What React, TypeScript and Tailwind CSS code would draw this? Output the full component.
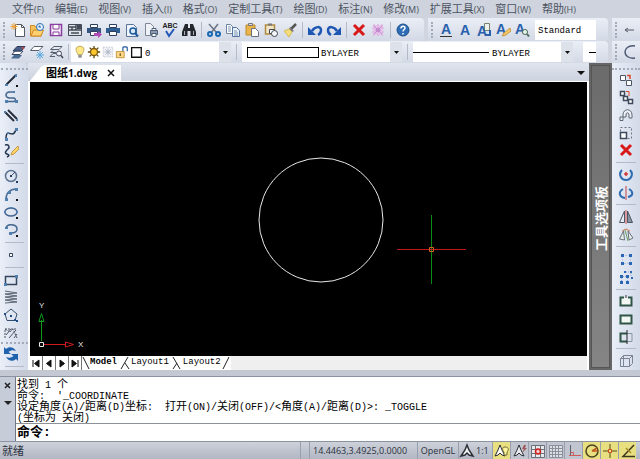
import type { ReactNode } from 'react'

const cjk = "font-['Open_Sans','Noto_Sans_CJK_SC',sans-serif]"
const mono = "font-['Liberation_Mono','Noto_Sans_CJK_SC',monospace]"

const menus = [
  ['文件', 'F'],
  ['编辑', 'E'],
  ['视图', 'V'],
  ['插入', 'I'],
  ['格式', 'O'],
  ['定制工具', 'T'],
  ['绘图', 'D'],
  ['标注', 'N'],
  ['修改', 'M'],
  ['扩展工具', 'X'],
  ['窗口', 'W'],
  ['帮助', 'H'],
]

const LetterA = ({ x, y }: { x: number; y: number }) => (
  <text x={x} y={y} textAnchor="middle" fontSize="14" fontWeight="700" fill="#2860ad" fontFamily="Liberation Sans">
    A
  </text>
)

const icons: Record<string, ReactNode> = {
  new: (
    <>
      <path d="M5.500 2.500h6l3 3v9h-9z" fill="#fff" stroke="#555b66" />
      <path d="M11.500 2.500v3h3" fill="none" stroke="#555b66" />
      <path d="M4 1v7M.5 4.500h7M1.500 2l5 5M6.500 2l-5 5" stroke="#f0a030" />
    </>
  ),
  open: (
    <>
      <path d="M1.500 3.500h4l1 1.500h6v9h-11z" fill="#f5c35b" stroke="#d08a26" />
      <path d="M2 14l2.500-6h10L12 14z" fill="#ffd070" stroke="#d08a26" />
      <circle cx="11" cy="5" r="3.500" fill="#e8f2fc" stroke="#2a6fb5" />
      <path d="M9 5l2-2 1 3z" fill="#2a6fb5" />
    </>
  ),
  save: (
    <>
      <path d="M2.500 2.500h11v11h-11z" fill="#f5edf8" stroke="#8a3f9e" strokeWidth="1.500" />
      <path d="M5 3v4h6V3M5 13v-3h6v3" fill="#fff" stroke="#8a3f9e" />
    </>
  ),
  saveAll: (
    <>
      <path d="M1.500 2.500h13v11h-13z" fill="#dfe3ea" stroke="#454b56" />
      <path d="M2 5h7M2 8h12M5 5v3M9 3v5M4 11h8" stroke="#454b56" strokeWidth="1.500" />
      <path d="M10 3h4v4h-4z" fill="#454b56" />
    </>
  ),
  plot: (
    <>
      <path d="M4.500 2.500h7v3h-7z" fill="#fff" stroke="#2d3f5c" />
      <path d="M1 6h14v5H1z" fill="#34557f" />
      <path d="M4.500 9.500h7v4h-7z" fill="#fff" stroke="#2d3f5c" />
      <path d="M8 11h4V9l4 3.500-4 3.500v-2H8z" fill="#b04ab5" />
    </>
  ),
  print: (
    <>
      <path d="M4.500 2.500h7v3h-7z" fill="#fff" stroke="#2d3f5c" />
      <path d="M1 6h14v5H1z" fill="#2f5e93" />
      <path d="M4.500 9.500h7v4h-7z" fill="#fff" stroke="#2d3f5c" />
    </>
  ),
  preview: (
    <>
      <path d="M2.500 2.500h7l3 3v9h-10z" fill="#eef4fb" stroke="#5c7596" />
      <circle cx="9" cy="9" r="3" fill="#d5e9fa" stroke="#1f5a9c" strokeWidth="1.500" />
      <path d="M11 11l3 3.500" stroke="#1f5a9c" strokeWidth="2" />
    </>
  ),
  publish: (
    <>
      <path d="M2.500 1.500h5l3 3v9h-8z" fill="#eef2f7" stroke="#7c8694" />
      <path d="M7.500 8.500h7v4h-7z" fill="#8c9bb0" stroke="#4c5d75" />
      <path d="M9 6.500h4v2H9zM9 11.500h4v3H9z" fill="#fff" stroke="#4c5d75" />
    </>
  ),
  spell: (
    <>
      <text x="8" y="6" textAnchor="middle" fontSize="7" fontWeight="700" fill="#222" fontFamily="Liberation Sans">
        ABC
      </text>
      <path d="M4 9l3 5 5-7" fill="none" stroke="#2458b8" strokeWidth="2" />
    </>
  ),
  find: (
    <>
      <path d="M4 2h3v4h2V2h3l3 8v4H9.500V9h-3v5H1v-4z" fill="#24272c" />
      <path d="M3.500 9v4M12.500 9v4" stroke="#aab0ba" />
    </>
  ),
  cut: (
    <>
      <path d="M3 2l8 9M12 2l-7 9" stroke="#6a7485" strokeWidth="1.500" />
      <circle cx="4" cy="12" r="2" fill="none" stroke="#1769b5" strokeWidth="2" />
      <circle cx="12" cy="12" r="2" fill="none" stroke="#1769b5" strokeWidth="2" />
    </>
  ),
  copy: (
    <>
      <path d="M1.500 2.500h4l2 2v7h-6z" fill="#fff" stroke="#6b83a5" />
      <path d="M7.500 5.500h4l3 3v6h-7z" fill="#e9f1fb" stroke="#5573a0" />
      <path d="M3 5h3M3 7h3M3 9h3M9 9h3M9 11h4M9 13h4" stroke="#7d95b5" />
    </>
  ),
  paste: (
    <>
      <path d="M2 3h9v10H2z" fill="#e9b44b" stroke="#c08a2a" />
      <path d="M4.500 1.500h4v2h-4z" fill="#ddd" stroke="#777" />
      <path d="M7.500 6.500h4l3 3v5h-7z" fill="#fff" stroke="#68707c" />
    </>
  ),
  pasteBlock: (
    <>
      <path d="M2.500 3h9v9h-9z" fill="#f2e6c8" stroke="#b08a40" strokeWidth="1.500" />
      <path d="M5 1.500h4v2H5z" fill="#777" />
      <path d="M6.500 7.500h5v4h-5z" fill="#fff" stroke="#3f4650" />
      <circle cx="11.500" cy="11.500" r="3" fill="#f5f7fa" stroke="#3f4650" />
    </>
  ),
  brush: (
    <>
      <path d="M14 2l-5 5" stroke="#555" strokeWidth="2.500" />
      <path d="M8 5l4 4-2 1-3-3z" fill="#777" />
      <path d="M2 9l5-2 3 3-3 5z" fill="#f2dc7e" stroke="#d6bd55" />
    </>
  ),
  undo: (
    <>
      <path d="M1 5v8h8z" fill="#1d56b3" />
      <path d="M5 9c3-5 9-5 9-1 0 2-1 4-3 5" fill="none" stroke="#1d56b3" strokeWidth="2.500" />
    </>
  ),
  redo: (
    <>
      <path d="M15 5v8H7z" fill="#1d56b3" />
      <path d="M11 9C8 4 2 4 2 8c0 2 1 4 3 5" fill="none" stroke="#1d56b3" strokeWidth="2.500" />
    </>
  ),
  erase: <path d="M3 3l10 10M13 3L3 13" stroke="#d81818" strokeWidth="3" />,
  explode: (
    <>
      <path d="M3 3h10v10H3z" fill="#e6c4ea" stroke="#d8a6df" strokeDasharray="2 2" />
      <path d="M4 4l8 8M12 4l-8 8" stroke="#c489cf" />
      <circle cx="8" cy="8" r="2.500" fill="#c48dcf" />
    </>
  ),
  help: (
    <>
      <circle cx="8" cy="8" r="6" fill="#2d6db5" stroke="#1d4f8c" />
      <path d="M6 6.500c0-3 4-3 4-.5 0 1.500-2 1.500-2 3.500M8 11v1.500" fill="none" stroke="#fff" strokeWidth="1.500" />
    </>
  ),
  textA: (
    <>
      <LetterA x={8} y={12} />
      <path d="M2 14.500h12" stroke="#333" />
    </>
  ),
  textB: <LetterA x={8} y={13} />,
  textC: (
    <>
      <path d="M8.500 1.500h5v7h-5z" fill="#eef0ec" stroke="#78806e" />
      <LetterA x={6} y={14} />
      <path d="M14 8v5h-4" fill="none" stroke="#2860ad" strokeWidth="2" />
    </>
  ),
  textD: (
    <>
      <LetterA x={6} y={12} />
      <path d="M15 6l-6 5-2 3 4-1 5-4z" fill="#f3c667" stroke="#c99a43" />
    </>
  ),
  textE: (
    <>
      <LetterA x={6} y={12} />
      <circle cx="11" cy="10" r="2.500" fill="#e8f5ea" stroke="#4a6958" />
      <path d="M13 12l2 2.500" stroke="#4a6958" strokeWidth="2" />
    </>
  ),
  dimLine: <path d="M3 8h9M6 6L3 8l3 2" fill="none" stroke="#555b66" />,
  arcBig: <path d="M13 2C6 1 3 5 3 8s3 7 10 6" fill="none" stroke="#4c5974" strokeWidth="1.500" />,
  layers: (
    <>
      <path d="M4 11h8l-3 3.500H1z" fill="#4b6a94" />
      <path d="M5 7h8l-3 3.500H2z" fill="#fff" stroke="#3a4a66" />
      <path d="M7 2.500h8L11 7H3z" fill="#4a5d86" stroke="#2d3a58" />
      <path d="M12 3l2 2" stroke="#d04545" strokeWidth="1.500" />
    </>
  ),
  layerFreeze: (
    <>
      <path d="M5 2.500h9l-4 4H1.500z" fill="#fff" stroke="#56606f" />
      <path d="M11 7v8M7 11h8M8 8l6 6M14 8l-6 6" stroke="#58a7dd" />
    </>
  ),
  layerFind: (
    <>
      <path d="M6 2.500h8l-3 3H2.500zM3 8.500l2-2M2 12.500l3-3h3M2.500 8.500H8M2 12.500h5" fill="none" stroke="#56606f" />
      <circle cx="11" cy="9.500" r="2.500" fill="#eef" stroke="#3e4652" />
      <path d="M13 11.500l2 2.500" stroke="#3e4652" strokeWidth="1.500" />
    </>
  ),
  bulb: (
    <>
      <path d="M8 1.500c-6 0-5 5.500-2.500 8.500v1h5v-1C13 7 14 1.500 8 1.500z" fill="#ffe88a" stroke="#b9a04c" />
      <path d="M6 11.500h4v3H6z" fill="#8a8f98" />
    </>
  ),
  sun: (
    <>
      <path d="M8 1v14M1 8h14M3 3l10 10M13 3L3 13" stroke="#5e4812" strokeWidth="1.500" />
      <circle cx="8" cy="8" r="4" fill="#ffc72e" stroke="#7a5a10" strokeWidth="1.500" />
    </>
  ),
  vpFreeze: (
    <>
      <path d="M2.500 2.500h11v11h-11z" fill="#f1f3f6" stroke="#c3c9d3" strokeDasharray="2 1" />
      <path d="M8 4v8M4 8h8M5 5l6 6M11 5l-6 6" stroke="#a9b4c4" />
    </>
  ),
  lock: (
    <>
      <path d="M9 7V3.500c0-2 5-2 5 0V7" fill="none" stroke="#3b6ba5" strokeWidth="1.500" />
      <path d="M1.500 7.500h9v7h-9z" fill="#ffd98a" stroke="#c18d35" />
      <path d="M6 9.500v3" stroke="#7a5a10" strokeWidth="1.500" />
    </>
  ),
  swatch: <path d="M3 3h11v11H3z" fill="#fff" stroke="#111" strokeWidth="1.500" />,
  line: (
    <>
      <path d="M3.500 12.500l9-9" stroke="#222a36" strokeWidth="2" />
      <path d="M2 12h3v2H2zM12 2h2v3h-2z" fill="#5080b0" />
      <path d="M13 13h2v2h-2z" fill="#111" />
    </>
  ),
  polyline: (
    <>
      <path d="M10 2H6C2 3 2 7 6 8h5c2 1 2 3 0 3.500H3" fill="none" stroke="#44658f" strokeWidth="1.500" />
      <path d="M10 1h2v2h-2zM2 10h3v3H2zM12 10h3v3h-3z" fill="#5080b0" />
    </>
  ),
  multiline: (
    <>
      <path d="M2 4l9 9M5 2l9 9" stroke="#27303d" strokeWidth="2" />
      <path d="M1 3h2v2H1zM13 11h2v2h-2z" fill="#5080b0" />
    </>
  ),
  spline: (
    <>
      <path d="M3 13c0-9 4-5 6-5s3-1 4-5" fill="none" stroke="#25334a" strokeWidth="1.500" />
      <path d="M2 12h3v3H2zM12 2h3v3h-3zM4 6h2v2H4z" fill="#5080b0" />
    </>
  ),
  freehand: (
    <>
      <path d="M2 2c4-1 5 2 3 4s-4 4-1 5 2 2 0 3" fill="none" stroke="#26384f" strokeWidth="1.500" />
      <path d="M15 3l-6 6-1 3 3-1 5-5z" fill="#ffd26a" stroke="#c49a44" />
    </>
  ),
  circle: (
    <>
      <circle cx="8" cy="8" r="5.500" fill="none" stroke="#5b718f" strokeWidth="1.500" />
      <path d="M8 8l4-4" stroke="#456" />
      <path d="M7 7h2v2H7zM13 13h2v2h-2z" fill="#1e3c66" />
    </>
  ),
  arc: (
    <>
      <path d="M3 13C3 7 7 3 13 3" fill="none" stroke="#4a6d96" strokeWidth="1.500" />
      <path d="M2 12h3v3H2zM12 2h3v3h-3zM5 5h3v3H5z" fill="#5080b0" />
      <path d="M13 13h2v2h-2z" fill="#111" />
    </>
  ),
  ellipse: (
    <>
      <ellipse cx="8" cy="8" rx="6" ry="4" fill="none" stroke="#44658f" strokeWidth="1.500" />
      <path d="M1 7h2v2H1zM13 7h2v2h-2zM7 3h2v2H7z" fill="#5080b0" />
      <path d="M13 13h2v2h-2z" fill="#111" />
    </>
  ),
  ellipseArc: (
    <>
      <path d="M3 6c1-5 11-4 11 1 0 3-3 4-6 4" fill="none" stroke="#44658f" strokeWidth="1.500" />
      <path d="M2 5h3v2H2zM6 10h3v3H6z" fill="#5080b0" />
      <path d="M13 13h2v2h-2z" fill="#111" />
    </>
  ),
  point: <path d="M6.500 6.500h3v3h-3z" fill="#fff" stroke="#33445c" />,
  rect: (
    <>
      <path d="M2.500 4.500h11v8h-11z" fill="none" stroke="#33445c" strokeWidth="1.500" />
      <path d="M1 11h3v3H1zM12 3h3v3h-3z" fill="#5080b0" />
    </>
  ),
  helix: (
    <path d="M2 2l12 2L2 5l12 2L2 8l12 2-12 1 12 2-12 1" fill="none" stroke="#5d6674" strokeLinejoin="round" />
  ),
  polygon: (
    <>
      <path d="M8 2l6 5-2 6.500H4L2 7z" fill="none" stroke="#33506f" />
      <path d="M7 8h2v2H7zM1 6h2v2H1zM13 13h2v2h-2zM11 12h2v2h-2z" fill="#1e4c86" />
    </>
  ),
  hatch: (
    <>
      <path d="M2 4h12M2 13V4l5 3 3-3 4 9" fill="none" stroke="#4b5563" strokeDasharray="2 1" />
      <path d="M3 10l5-6M6 13l7-8M11 13l3-4" stroke="#4b5563" />
    </>
  ),
  cycle: (
    <>
      <path d="M1 1v7h7L5.500 6C8 4 10 4 13 5c-2-4-7-5-10-2z" fill="#1f62ad" />
      <path d="M15 15V8H8l2.500 2C8 12 6 12 3 11c2 4 7 5 10 2z" fill="#1f62ad" />
    </>
  ),
  copyObj: (
    <>
      <path d="M2.500 3.500h5v5h-5zM8.500 8.500h5v5h-5z" fill="#fff" stroke="#4c5665" />
      <path d="M9 3.500h3V7" fill="none" stroke="#d84a28" strokeWidth="1.500" />
    </>
  ),
  arrayCopy: (
    <>
      <path d="M2.500 2.500h4v4h-4zM5.500 7.500h4v4h-4zM10.500 10.500h4v4h-4z" fill="#fff" stroke="#3e4a5c" strokeWidth="1.500" />
      <path d="M8 2.500h3V7" fill="none" stroke="#d84a28" />
    </>
  ),
  offset: (
    <>
      <path d="M2 13.500h3V8c0-7 9-7 9 0v3h-3V8c0-3-3-3-3 0v2H2z" fill="#eef1f6" stroke="#5d6674" />
    </>
  ),
  scale: (
    <>
      <path d="M2.500 2.500h11v11h-11z" fill="none" stroke="#6d7583" strokeDasharray="2 2" />
      <path d="M2.500 7.500h6v6h-6z" fill="#fff" stroke="#3e4a5c" strokeWidth="1.500" />
    </>
  ),
  rotate: (
    <>
      <path d="M4 3c-4 4-1 10 4 10s8-6 4-10" fill="none" stroke="#2f6cb2" strokeWidth="2" />
      <path d="M8 5v4M6 7h4" stroke="#d83535" strokeWidth="1.500" />
    </>
  ),
  rotate3d: (
    <>
      <path d="M5 4c-5 3-4 8 2 9M11 4c5 3 4 7-1 8" fill="none" stroke="#2f6cb2" strokeWidth="2" />
      <path d="M8 1v14" stroke="#c04242" />
    </>
  ),
  mirror: (
    <>
      <path d="M6.500 2v11.500H1.500z" fill="#e7ebf1" stroke="#4c5665" />
      <path d="M9.500 2v11.500h5z" fill="#8a94a5" stroke="#4c5665" />
      <path d="M8 1v14" stroke="#d05050" />
    </>
  ),
  mirror3d: (
    <>
      <path d="M5.500 4l1 9-5-1zM10 4l1 9 4-2z" fill="#e9eee8" stroke="#67707c" />
      <path d="M7 3l3 11" stroke="#63a05c" />
      <path d="M4 4l4-2 4 2" fill="none" stroke="#d0764a" />
    </>
  ),
  array: (
    <>
      <path d="M4.500 4.500h8v8h-8z" fill="none" stroke="#86a6d4" strokeDasharray="1 2" />
      <path d="M3 3h3v3H3zM11 3h3v3h-3zM3 11h3v3H3zM11 11h3v3h-3z" fill="#2b66b5" />
    </>
  ),
  array3d: (
    <>
      <path d="M2 6h3v3H2zM8 6h3v3H8zM2 12h3v3H2zM8 12h3v3H8zM6 2h2v2H6zM12 2h2v2h-2zM13 8h2v2h-2z" fill="#2b66b5" />
      <path d="M5 7.500h3M3.500 9v3M9.500 9v3M8 3h4M13 4v4" stroke="#86a6d4" strokeDasharray="1 1" />
    </>
  ),
  breakAt: (
    <>
      <path d="M6 4.500H2.500v8h11v-8H10" fill="#f2f7f3" stroke="#2f5547" strokeWidth="2" />
      <path d="M8 2v3" stroke="#333" />
    </>
  ),
  join: <path d="M2.500 4.500h11v8h-11z" fill="#f2f7f3" stroke="#2f5547" strokeWidth="2" />,
  trim: (
    <>
      <path d="M9 4.500H2.500v8H9" fill="none" stroke="#2f5547" strokeWidth="2" />
      <path d="M9 4.500h5v8H9" fill="none" stroke="#8a94a0" />
      <path d="M9 1v14" stroke="#222" />
    </>
  ),
  box: (
    <path d="M2.500 5.500h9v8h-9zM2.500 5.500l3-3h9l-3 3M14.500 2.500v8l-3 3M5.500 2.500v11" fill="none" stroke="#7a8494" />
  ),
  annotation: <path d="M8 2l2 5 4 6-4-1-2-2-2 2-4 1 4-6z" fill="#f2f3f5" stroke="#2c3036" strokeWidth="1.500" />,
  annoVisible: (
    <>
      <path d="M6 2l2 5 3 6-3-1-2-2-2 2-3 1 3-6z" fill="#fff" stroke="#2c3036" />
      <path d="M11 4c4 0 4 3 2 5v3h-3V9C8 7 8 4 11 4z" fill="#fff59a" stroke="#6c6a35" />
    </>
  ),
  annoAuto: (
    <>
      <path d="M7 2l2 5 3 6-3-1-2-2-2 2-3 1 3-6z" fill="#e8eaee" stroke="#2c3036" />
      <path d="M12 2l-2 4h2l-2 4 5-5h-2l1-3z" fill="#a0565c" />
    </>
  ),
  snap: (
    <>
      <path d="M1.500 2.500h13v12h-13zM1 6.500h14M1 10.500h14M5.500 2v13M10.500 2v13" fill="#e7e9ed" stroke="#6a6f79" />
      <circle cx="8" cy="8.500" r="2.500" fill="#f8c8c8" stroke="#c92020" strokeWidth="1.500" />
    </>
  ),
  grid: (
    <path
      d="M1.500 2.500h13v12h-13zM1 5.500h14M1 8.500h14M1 11.500h14M4.500 2v13M7.500 2v13M10.500 2v13"
      fill="#dcdfe4"
      stroke="#8a9099"
    />
  ),
  ortho: (
    <>
      <path d="M4.500 2v11" stroke="#5c626c" />
      <path d="M3 12.500h12M4.500 9.500h3v3" fill="none" stroke="#d05a5a" />
    </>
  ),
  polar: (
    <>
      <circle cx="8" cy="8" r="6" fill="none" stroke="#4a4322" strokeWidth="1.500" />
      <path d="M8 8l5-3M8 8h6" stroke="#c05a20" strokeWidth="1.500" />
    </>
  ),
  osnap: (
    <>
      <path d="M8 1v14M1 8h14" stroke="#51491f" />
      <path d="M6.500 6.500h3v3h-3z" fill="#ffe27a" stroke="#c9481e" />
    </>
  ),
  otrack: (
    <>
      <path d="M14 2L3 13.500h12" fill="none" stroke="#3d3820" strokeWidth="1.500" />
      <path d="M6 5l5 5" stroke="#a58c28" strokeWidth="1.500" />
    </>
  ),
}

const Icon = ({ name }: { name: string }) => (
  <svg viewBox="0 0 16 16" className="size-4 shrink-0" aria-hidden="true">
    {icons[name]}
  </svg>
)

const HSep = () => (
  <span className="flex w-1.5 shrink-0 justify-center">
    <span className="h-4 w-px bg-[#b4bac8]" />
  </span>
)

const HGrip = () => <span className="mx-[3px] h-4 w-0.5 shrink-0 border-l-2 border-dotted border-[#a3aaba]" />

// names: '|' draws a separator
const HTools = ({ names }: { names: string[] }) => (
  <>
    {names.map((name, idx) =>
      name === '|' ? (
        <HSep key={idx} />
      ) : (
        <button key={idx} type="button" aria-label={name} className="flex h-5 w-[19px] shrink-0 items-center justify-center">
          <Icon name={name} />
        </button>
      )
    )}
  </>
)

const VGrip = () => <span className="h-[3px] w-full border-t-2 border-dotted border-[#a3aaba]" />

const VTools = ({ names }: { names: string[] }) => (
  <>
    {names.map((name, idx) => {
      if (name === '|') {
        return (
          <span key={idx} className="flex h-[7px] w-full items-center px-1">
            <span className="h-px w-full bg-[#b4bac8]" />
          </span>
        )
      }
      if (name === ':') return <VGrip key={idx} />
      return (
        <button key={idx} type="button" aria-label={name} className="flex h-[18px] w-5 items-center justify-center">
          <Icon name={name} />
        </button>
      )
    })}
  </>
)

const DropArrow = () => (
  <span className="pointer-events-none flex h-5 w-3 shrink-0 items-center justify-center bg-[#dde1e9]">
    <svg viewBox="0 0 5 3" className="h-[3px] w-[5px]">
      <path d="M0 0h5L2.500 3z" fill="#111" />
    </svg>
  </span>
)

const Combo = ({ label, value, children }: { label: string; value: string; children: ReactNode }) => (
  <div className="flex h-5 w-40 shrink-0 items-center bg-white">
    {children}
    <select
      aria-label={label}
      className={`${mono} h-5 min-w-0 flex-1 appearance-none bg-transparent pt-1 text-[9px] leading-4 text-black`}
    >
      <option>{value}</option>
    </select>
    <DropArrow />
  </div>
)

// half-width characters are set one size smaller than the CJK ones
const ConsoleLine = ({ text }: { text: string }) => (
  <p className="h-[11px] whitespace-pre">
    {text.split(/([\u4e00-\u9fff]+)/).map((part, idx) => (
      <span key={idx} className={idx % 2 ? 'text-[11px]' : 'text-[10px]'}>
        {part}
      </span>
    ))}
  </p>
)

const history = [
  '找到 1 个',
  "命令:  '_COORDINATE",
  '设定角度(A)/距离(D)坐标:  打开(ON)/关闭(OFF)/<角度(A)/距离(D)>: _TOGGLE',
  '(坐标为 关闭)',
]

const toggles = [
  { name: 'annoVisible', on: true },
  { name: 'annoAuto', on: false },
  { name: 'snap', on: false },
  { name: 'grid', on: false },
  { name: 'ortho', on: false },
  { name: 'polar', on: true },
  { name: 'osnap', on: true },
  { name: 'otrack', on: true },
]

const MenuBar = () => (
  <nav className="flex h-[18px] items-center gap-[11px] overflow-hidden bg-[#ced3dd] pl-3 text-[#4b5260]">
    {menus.map(([label, key]) => (
      <button key={key} type="button" className="shrink-0 text-[11px] leading-4 whitespace-nowrap">
        {label}
        <span className="text-[9px]">({key})</span>
      </button>
    ))}
  </nav>
)

const bar = 'flex items-center bg-linear-to-b from-[#eaeef6] to-[#d3d9e5]'

const Toolbars = () => (
  <header className="bg-[#d0d5df]">
    <div className="flex h-[23px] gap-1">
      <div className={`${bar} w-[424px] shrink-0 rounded-r`}>
        <HGrip />
        <HTools
          names={[
            'new', 'open', 'save', 'saveAll', 'plot', 'print', 'preview', 'publish', 'spell', 'find', '|',
            'cut', 'copy', 'paste', 'pasteBlock', 'brush', '|', 'undo', 'redo', '|', 'erase', 'explode', '|', 'help',
          ]}
        />
      </div>
      <div className={`${bar} flex-1 rounded-r`}>
        <HGrip />
        <HTools names={['textA', 'textB', 'textC', 'textD', 'textE']} />
        <input
          aria-label="Text style"
          defaultValue="Standard"
          className={`${mono} ml-1 h-5 w-[61px] bg-white px-[3px] pt-0.5 text-[9px] text-black`}
        />
      </div>
      <div className={`${bar} w-7 shrink-0`}>
        <HGrip />
        <HTools names={['dimLine']} />
      </div>
    </div>
    <div className="flex h-[22px] gap-1">
      <div className={`${bar} min-w-0 flex-1 rounded-r`}>
        <HGrip />
        <HTools names={['layers', 'layerFreeze', 'layerFind', '|']} />
        <Combo label="Layer" value="0">
          <div className="mr-0.5 flex items-center pl-0.5">
            {['bulb', 'sun', 'vpFreeze', 'lock', 'swatch'].map((name) => (
              <svg key={name} viewBox="0 0 16 16" className="size-3.5">
                {icons[name]}
              </svg>
            ))}
          </div>
        </Combo>
        <span className="flex w-[11px] shrink-0 justify-center">
          <HSep />
        </span>
        <Combo label="Color" value="BYLAYER">
          <span className="mr-0.5 ml-[5px] h-[11px] w-[72px] border border-black bg-white" />
        </Combo>
        <span className="flex w-[11px] shrink-0 justify-center">
          <HSep />
        </span>
        <Combo label="Linetype" value="BYLAYER">
          <span className="mr-[3px] h-px w-[76px] bg-black" />
        </Combo>
        <span className="ml-2.5 flex h-5 w-[13px] items-center justify-end bg-white">
          <span className="h-px w-[7px] bg-black" />
        </span>
      </div>
      <div className={`${bar} w-7 shrink-0`}>
        <HGrip />
        <HTools names={['arcBig']} />
      </div>
    </div>
  </header>
)

const Drawing = () => (
  <div className="relative min-h-0 flex-1 bg-black">
    <svg className="absolute inset-0 size-full">
      <circle cx="291" cy="138" r="62" fill="none" stroke="#e8e8e8" />
      <path d="M401.500 133v69" stroke="#0a8a14" />
      <path d="M367 167.500h69" stroke="#c01818" />
      <path d="M399.500 165.500h4v4h-4z" fill="none" stroke="#d0601c" />
    </svg>
    <svg viewBox="0 0 60 60" className="absolute bottom-0 left-0 size-[60px]">
      <path d="M11.500 45V24M9 25.500l2.500-8 2.500 8z" fill="none" stroke="#0a9a1c" />
      <path d="M14 48.500h21M35.500 46l8 2.500-8 2.500z" fill="none" stroke="#d01c1c" />
      <path d="M9.500 46.500h4v4h-4z" fill="none" stroke="#e8e8e8" />
      <text x="9" y="12" fontSize="8" fill="#e8e8e8" fontFamily="Liberation Sans">
        Y
      </text>
      <text x="48" y="51" fontSize="8" fill="#e8e8e8" fontFamily="Liberation Sans">
        X
      </text>
    </svg>
  </div>
)

const navPaths = [
  'M2 1v7M8 1v7L3.500 4.500z',
  'M7 1v7L2.500 4.500z',
  'M3 1v7L7.500 4.500z',
  'M2 1v7L6.500 4.500zM8 1v7',
]

const SheetTabs = () => (
  <div className="flex h-3.5 shrink-0 bg-[#efeff0]">
    <div className={`${mono} flex items-center bg-white text-[9px] text-black`}>
      {navPaths.map((d) => (
        <button key={d} type="button" aria-label="Sheet" className="flex h-3.5 w-[13px] items-center justify-center border-r border-[#777]">
          <svg viewBox="0 0 10 9" className="h-[9px] w-2.5">
            <path d={d} fill="#111" stroke="#111" />
          </svg>
        </button>
      ))}
      <svg viewBox="0 0 8 14" className="h-3.5 w-2">
        <path d="M1 1l6 12" stroke="#222" />
      </svg>
      <button type="button" className="font-bold">
        Model
      </button>
      <svg viewBox="0 0 14 14" className="h-3.5 w-3.5">
        <path d="M11 1L4 13M8 7l4 6" fill="none" stroke="#222" />
      </svg>
      <button type="button">Layout1</button>
      <svg viewBox="0 0 14 14" className="h-3.5 w-3.5">
        <path d="M4 1l7 12M8 7l-4 6" fill="none" stroke="#222" />
      </svg>
      <button type="button">Layout2</button>
      <svg viewBox="0 0 10 14" className="h-3.5 w-2.5">
        <path d="M8 1L2 13" stroke="#222" />
      </svg>
    </div>
  </div>
)

const Workspace = () => (
  <section className="flex min-w-0 flex-1 flex-col">
    <div className="flex h-[18px] items-end justify-between bg-linear-to-b from-[#dfe4ed] to-[#cdd3df] pl-0.5">
      <div className="flex h-4">
        <svg viewBox="0 0 16 16" className="size-4">
          <path d="M0 16L11 2q2-2 5-2v16z" fill="#fff" />
        </svg>
        <div className="flex items-center gap-2 bg-white pr-1 text-black">
          <span className="text-[11px] leading-3 font-bold">
            图纸<span className="text-[10px]">1.dwg</span>
          </span>
          <button type="button" aria-label="Close" className="flex size-3 items-center justify-center">
            <svg viewBox="0 0 8 8" className="size-2">
              <path d="M1 1l6 6M7 1L1 7" stroke="#111" strokeWidth="1.500" />
            </svg>
          </button>
        </div>
      </div>
      <button type="button" aria-label="Drawings" className="flex h-4 w-4 items-center justify-center">
        <svg viewBox="0 0 8 4" className="h-1 w-2">
          <path d="M0 0h8L4 4z" fill="#111" />
        </svg>
      </button>
    </div>
    <div className="flex min-h-0 flex-1 flex-col border-x-2 border-t border-white">
      <Drawing />
      <SheetTabs />
    </div>
  </section>
)

const CommandPanel = () => (
  <section className="flex h-[64px] shrink-0">
    <div className="flex w-[15px] shrink-0 flex-col items-center gap-3 bg-[#c6ccd8] pt-1">
      <button type="button" aria-label="Close command line" className="flex h-2 items-center">
        <svg viewBox="0 0 7 7" className="size-[7px]">
          <path d="M1 1l5 5M6 1L1 6" stroke="#222" strokeWidth="1.500" />
        </svg>
      </button>
      <button type="button" aria-label="Command line menu" className="flex h-1 items-center">
        <svg viewBox="0 0 8 4" className="h-1 w-2">
          <path d="M0 0h8L4 4z" fill="#222" />
        </svg>
      </button>
    </div>
    <div className={`${mono} flex min-w-0 flex-1 flex-col border-l border-[#707784] bg-white text-black`}>
      <div className="h-[47px] overflow-hidden border-b border-[#8d9199] pt-0.5 pl-px leading-[11px]">
        {history.map((text) => (
          <ConsoleLine key={text} text={text} />
        ))}
      </div>
      <div className="flex flex-1 items-center pl-px">
        <label htmlFor="command" className="text-[13px] leading-4 font-bold">
          命令:
        </label>
        <input id="command" className="h-4 min-w-0 flex-1 bg-white text-[11px] outline-none" />
      </div>
    </div>
  </section>
)

const StatusBar = () => (
  <footer className="flex h-[18px] shrink-0 items-stretch border-t border-[#8b93a3] bg-linear-to-b from-[#cdd1da] to-[#b1b7c3] text-[9px] text-[#2c323d]">
    <span className="flex flex-1 items-center pl-0.5 text-[11px] leading-4">就绪</span>
    <span className="w-2.5 border-x border-[#989fae]" />
    <span className="flex w-[108px] items-center border-r border-[#989fae] pl-[3px]">14.4463,3.4925,0.0000</span>
    <button type="button" className="w-[41px] border-r border-[#989fae]">
      OpenGL
    </button>
    <button type="button" className="flex w-[33px] items-center gap-px">
      <Icon name="annotation" />
      1:1
    </button>
    {toggles.map(({ name, on }) => (
      <button
        key={name}
        type="button"
        aria-label={name}
        aria-pressed={on}
        className={`flex w-[18px] items-center justify-center border-l border-[#989fae] ${on ? 'bg-[#e8df80]' : 'bg-[#c0c5cf]'}`}
      >
        <Icon name={name} />
      </button>
    ))}
    <span className="w-1" />
  </footer>
)

export default function App() {
  return (
    <div className={`${cjk} flex h-screen flex-col overflow-hidden bg-[#c9cfda] select-none`}>
      <MenuBar />
      <Toolbars />
      <main className="flex min-h-0 flex-1">
        <aside className="flex w-7 shrink-0 flex-col items-start rounded-tr bg-linear-to-r from-[#e9eef7] to-[#d3dae8] pt-[5px] pl-px">
          <VGrip />
          <VTools
            names={[
              'line', 'polyline', 'multiline', 'spline', 'freehand', '|', 'circle', 'arc', 'ellipse', 'ellipseArc', '|',
              'point', '|', 'rect', 'helix', 'polygon', 'hatch', ':', 'cycle', '|',
            ]}
          />
        </aside>
        <Workspace />
        <aside className="flex w-[23px] shrink-0 border-2 border-[#666] bg-linear-to-b from-[#6b6b6b] to-[#858585]">
          <div className="flex flex-1 flex-col items-center justify-center border border-[#555] pt-1">
            <h2 className="rotate-180 text-[13px] leading-4 font-bold whitespace-nowrap text-white [text-orientation:sideways] [writing-mode:vertical-rl]">
              工具选项板
            </h2>
          </div>
        </aside>
        <aside className="flex w-7 shrink-0 flex-col items-center bg-linear-to-r from-[#e9eef7] to-[#d3dae8] pt-[5px]">
          <VGrip />
          <VTools
            names={[
              'copyObj', 'arrayCopy', 'offset', 'scale', 'erase', '|', 'rotate', 'rotate3d', '|', 'mirror', 'mirror3d', '|',
              'array', 'array3d', '|', 'breakAt', 'join', 'trim', '|', 'box',
            ]}
          />
        </aside>
      </main>
      <div className="h-[7px] shrink-0 border-b border-[#8b93a3] bg-[#c3c8d3]" />
      <CommandPanel />
      <StatusBar />
    </div>
  )
}
